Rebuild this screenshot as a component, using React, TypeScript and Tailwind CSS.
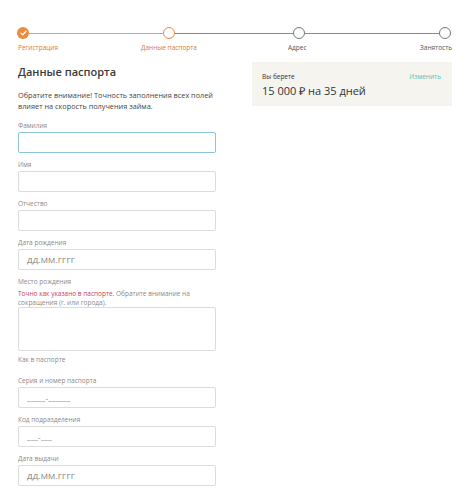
import React from "react";

function Field({ label, placeholder, focused }: { label: string; placeholder?: string; focused?: boolean }) {
  return (
    <div className="flex flex-col">
      <div className="text-[6.5px] leading-[8px] h-[8px] text-[#8a8a8a]">{label}</div>
      <div
        className={
          "mt-[2px] h-[21px] w-[198px] rounded-[2px] border flex items-center px-[8px] text-[8px] tracking-[0.2px] text-[#777] " +
          (focused ? "border-[#8cc3d8]" : "border-[#dcdcdc]")
        }
      >
        {placeholder}
      </div>
    </div>
  );
}

export default function App() {
  return (
    <div className="w-[475px] h-[493px] bg-white overflow-hidden font-['Open_Sans',sans-serif] text-[#333]">
      {/* Stepper */}
      <div className="pt-[27px] pl-[17px] flex items-center">
        <div className="w-[12px] h-[12px] rounded-full bg-[#ec8a3e] flex items-center justify-center shrink-0">
          <svg width="7" height="6" viewBox="0 0 7 6">
            <path d="M1 3.2 L2.8 4.8 L6 1.2" stroke="white" strokeWidth="1.3" fill="none" strokeLinecap="round" strokeLinejoin="round" />
          </svg>
        </div>
        <div className="w-[134px] h-[1px] bg-[#e9a04e]" />
        <div className="w-[12px] h-[12px] rounded-full border border-[#ec8a3e] bg-white shrink-0" />
        <div className="w-[118px] h-[1px] bg-[#8a8a8a]" />
        <div className="w-[12px] h-[12px] rounded-full border border-[#777] bg-white shrink-0" />
        <div className="w-[134px] h-[1px] bg-[#8a8a8a]" />
        <div className="w-[12px] h-[12px] rounded-full border border-[#777] bg-white shrink-0" />
      </div>
      <div className="mt-[5px] flex text-[6.5px] leading-[8px]">
        <div className="w-[141px] pl-[18px] text-[#e0773a]">Регистрация</div>
        <div className="w-[147px] text-[#e0773a]">Данные паспорта</div>
        <div className="w-[132px] text-[#555]">Адрес</div>
        <div className="text-[#555]">Занятость</div>
      </div>

      <div className="flex mt-[10px]">
        {/* Left column */}
        <div className="ml-[18px] w-[198px] flex flex-col">
          <div className="mt-[2px] text-[11px] leading-[16px] font-semibold text-[#3a3a3a]">Данные паспорта</div>
          <div className="mt-[10px] text-[7.3px] leading-[11px] text-[#444]">
            Обратите внимание! Точность заполнения всех полей влияет на скорость получения займа.
          </div>
          <div className="mt-[10px] flex flex-col gap-[8px]">
            <Field label="Фамилия" focused />
            <Field label="Имя" />
            <Field label="Отчество" />
            <Field label="Дата рождения" placeholder="ДД.ММ.ГГГГ" />
          </div>
          <div className="mt-[8px] text-[6.5px] leading-[8px] text-[#8a8a8a]">Место рождения</div>
          <p className="mt-[3px] text-[6.5px] leading-[9px] text-[#8a8a8a]">
            <span className="text-[#c2405e]">Точно как указано в паспорте.</span> Обратите внимание на сокращения (г. или города).
          </p>
          <div className="h-[44px] w-[198px] rounded-[2px] border border-[#dcdcdc]" />
          <div className="mt-[5px] text-[6.5px] leading-[8px] text-[#8a8a8a]">Как в паспорте</div>
          <div className="mt-[13px] flex flex-col gap-[8px]">
            <Field label="Серия и номер паспорта" placeholder="_____-______" />
            <Field label="Код подразделения" placeholder="___-___" />
            <Field label="Дата выдачи" placeholder="ДД.ММ.ГГГГ" />
          </div>
        </div>

        {/* Right card */}
        <div className="ml-[36px] w-[200px] h-[44px] bg-[#f6f4ef] px-[10px] pt-[11px]">
          <div className="flex justify-between text-[6.5px] leading-[8px]">
            <span className="text-[#333]">Вы берете</span>
            <span className="text-[#5cc0b4] mr-[1px]">Изменить</span>
          </div>
          <div className="mt-[3px] text-[11px] leading-[14px] text-[#333]">15 000 ₽ на 35 дней</div>
        </div>
      </div>
    </div>
  );
}
